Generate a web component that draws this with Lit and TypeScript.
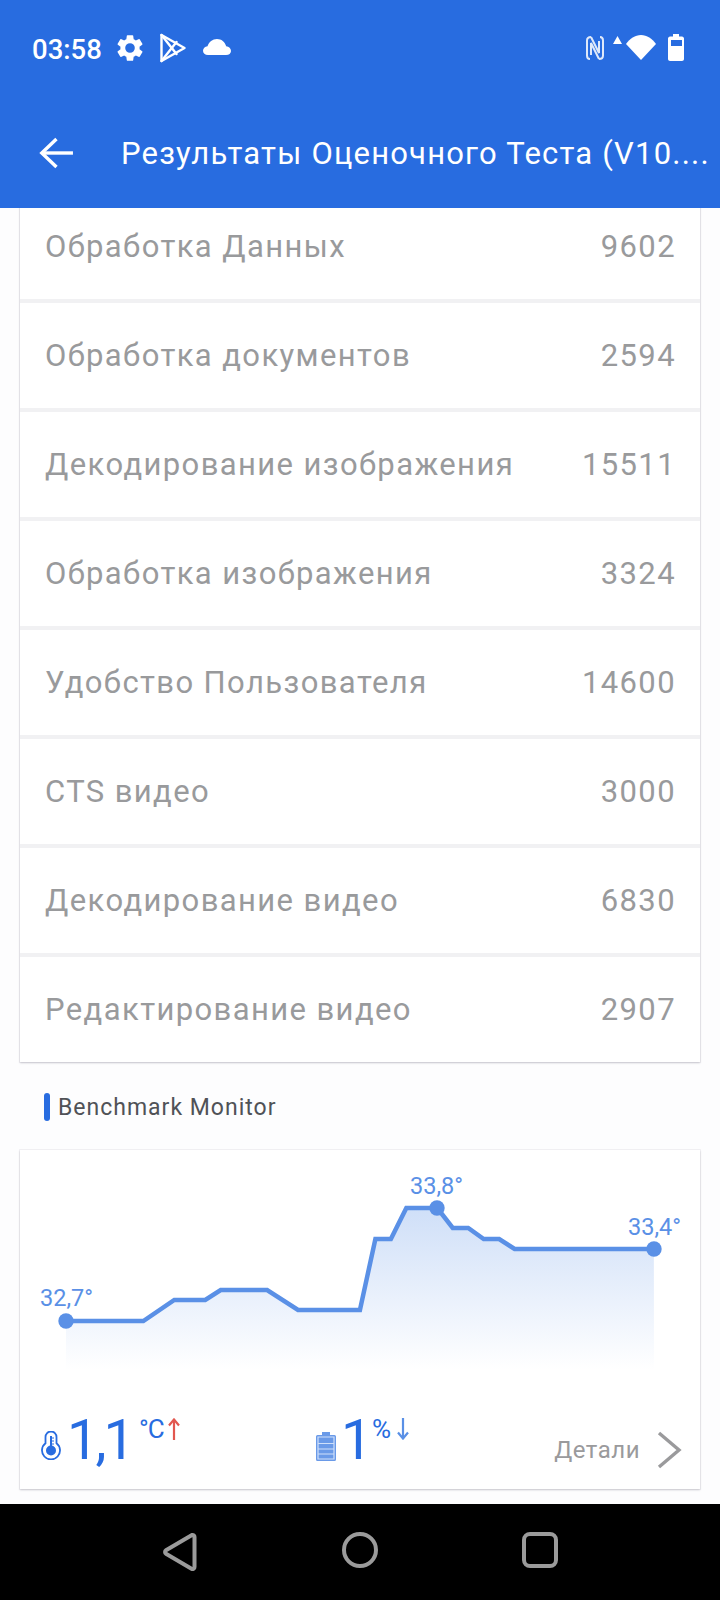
import { LitElement, html, css, svg } from "lit";
import { customElement } from "lit/decorators.js";

const ROWS: [string, string][] = [
  ["Обработка Данных", "9602"],
  ["Обработка документов", "2594"],
  ["Декодирование изображения", "15511"],
  ["Обработка изображения", "3324"],
  ["Удобство Пользователя", "14600"],
  ["CTS видео", "3000"],
  ["Декодирование видео", "6830"],
  ["Редактирование видео", "2907"],
];

const STEP = 15.47;
const TEMPS: [number, number][] = [
  [0, 1321], [5, 1321], [7, 1300], [9, 1300], [10, 1290], [13, 1290], [15, 1310], [19, 1310],
  [20, 1239], [21, 1239], [22, 1208], [24, 1208], [25, 1228], [26, 1228], [27, 1239], [28, 1239],
  [29, 1249], [38, 1249],
];
// chart svg starts at x=20,y=1150 on the page
const PTS = TEMPS.map(([i, y]) => [66 + STEP * i - 20, y - 1150] as [number, number]);
const LINE = PTS.map((p) => p.join(",")).join(" ");
const AREA = `${LINE} 634,220 46,220`;

@customElement("app-root")
export class AppRoot extends LitElement {
  static styles = css`
    :host {
      display: block;
      width: 720px;
      height: 1600px;
      background: #fdfdfe;
      font-family: Roboto, "Noto Sans", sans-serif;
      overflow: hidden;
    }
    .screen { display: flex; flex-direction: column; height: 1600px; }
    .top { height: 208px; background: #286ce0; color: #fff; flex: none; display: flex; flex-direction: column; position: relative; z-index: 1; }
    .status { height: 98px; display: flex; align-items: center; padding: 0 0 0 32px; }
    .time { font-size: 27.5px; font-weight: 500; width: 82px; }
    .status svg { display: block; flex: none; }
    .gear { margin-top: -2px; }
    .play { margin-left: 14px; margin-top: -3px; }
    .cloud { margin-left: 17px; margin-top: -4px; }
    .sp { flex: 1; }
    .nfc { margin-right: 9px; margin-top: -2px; }
    .tri { align-self: flex-start; margin: 36px 4px 0 0; }
    .wifi { margin-right: 12px; margin-top: -3px; }
    .batt { margin-right: 36px; margin-top: -3px; }
    .bar { height: 110px; display: flex; align-items: center; padding-left: 39px; }
    .title { margin-left: 48px; font-size: 31px; letter-spacing: 1.2px; white-space: nowrap; width: 600px; overflow: hidden; }
    .content { flex: 1; display: flex; flex-direction: column; min-height: 0; }
    .rows-clip { height: 858px; overflow: hidden; flex: none; }
    .rows { display: flex; flex-direction: column; gap: 4px; margin: -14px 20px 0; background: #f1f1f3; box-shadow: 0 1px 2px rgba(60, 60, 80, 0.25), 0 0 0 1px #f1f0f4; }
    .row {
      height: 105px;
      background: #fff;
      display: flex;
      align-items: center;
      justify-content: space-between;
      padding: 0 24px 0 25px;
      color: #999a9c;
      font-size: 31px;
      letter-spacing: 1.4px;
    }
    .section { display: flex; align-items: center; gap: 8px; margin: 26px 0 0 44px; height: 30px; }
    .tick { width: 6px; height: 28px; border-radius: 3px; background: #286ce0; }
    .section span { font-size: 23px; letter-spacing: 1px; color: #505257; }
    .card {
      margin: 28px 20px 0;
      height: 339px;
      background: #fff;
      box-shadow: 0 1px 2px rgba(60, 60, 80, 0.25), 0 0 0 1px #f3f2f5;
      display: flex;
      flex-direction: column;
    }
    .chart { display: block; flex: none; }
    .chart text { font-family: Roboto, sans-serif; font-size: 23.5px; fill: #5a90e6; }
    .stats { flex: none; height: 119px; display: flex; align-items: flex-start; }
    .stat { display: flex; align-items: flex-start; color: #286ce0; }
    .stat svg { display: block; flex: none; }
    .s1 { margin-left: 21px; width: 275px; }
    .icon-t { margin-top: 61px; }
    .icon-b { margin-top: 62px; }
    .arrow { margin-top: 48px; }
    .big { font-size: 56px; line-height: 56px; margin-top: 42px; white-space: nowrap; }
    .b1 { margin-left: 6px; width: 72px; letter-spacing: -3px; }
    .b2 { margin-left: 5px; width: 30px; }
    .unit { font-size: 26px; line-height: 30px; margin-top: 44px; white-space: nowrap; }
    .u1 { width: 29px; letter-spacing: -1px; }
    .u2 { width: 25px; margin-left: 1px; }
    .more { margin-left: auto; display: flex; align-items: center; margin-right: 18px; margin-top: 61px; color: #9a9a9c; font-size: 24px; letter-spacing: 0.5px; }
    .more svg { display: block; margin-left: 16px; }
    .gap { flex: 1; }
    .nav { height: 96px; flex: none; background: #000; display: flex; align-items: center; }
    .nav-in { display: grid; grid-template-columns: 180px 180px 180px; width: 540px; margin: 0 auto; justify-items: center; }
  `;

  render() {
    return html`<div class="screen">
      <div class="top">
        <div class="status">
          <span class="time">03:58</span>
          <svg class="gear" width="32" height="32" viewBox="0 0 24 24" fill="#fff"><path d="M19.14 12.94c.04-.3.06-.61.06-.94 0-.32-.02-.64-.07-.94l2.03-1.58a.49.49 0 0 0 .12-.61l-1.92-3.32a.49.49 0 0 0-.59-.22l-2.39.96c-.5-.38-1.03-.7-1.62-.94l-.36-2.54a.48.48 0 0 0-.48-.41h-3.84a.47.47 0 0 0-.47.41l-.36 2.54c-.59.24-1.13.57-1.62.94l-2.39-.96a.49.49 0 0 0-.59.22L2.74 8.87a.47.47 0 0 0 .12.61l2.03 1.58c-.05.3-.09.63-.09.94s.02.64.07.94l-2.03 1.58a.49.49 0 0 0-.12.61l1.92 3.32c.12.22.37.29.59.22l2.39-.96c.5.38 1.03.7 1.62.94l.36 2.54c.05.24.24.41.48.41h3.84c.24 0 .44-.17.47-.41l.36-2.54c.59-.24 1.13-.56 1.62-.94l2.39.96c.22.08.47 0 .59-.22l1.92-3.32a.47.47 0 0 0-.12-.61l-2.01-1.58zM12 15.6A3.6 3.6 0 1 1 12 8.4a3.6 3.6 0 0 1 0 7.2z"/></svg>
          <svg class="play" width="26" height="30" viewBox="0 0 26 30" fill="none" stroke="#fff" stroke-width="2.4" stroke-linejoin="round" stroke-linecap="round"><path d="M1.500 2 24.500 15 1.500 28z"/><path d="M1.500 2 16.500 21"/><path d="M1.500 28 16.500 9"/></svg>
          <svg class="cloud" width="28" height="16" viewBox="0 0 28 16" fill="#fff"><path d="M5 16C2 16 0 14.200 0 11.800 0 9.500 1.800 7.700 4.500 7.300 6 3 9.500 0 14 0c4.400 0 8 2.800 9.200 7.300C26 7.600 28 9.500 28 11.900 28 14.200 26 16 23 16z"/></svg>
          <span class="sp"></span>
          <svg class="nfc" width="18" height="24" viewBox="0 0 18 24" fill="none" stroke="#fff" stroke-width="2" opacity=".85"><path d="M5 1C2.500 1 1 2 1 4.500v15C1 22 2.500 23 4 23"/><path d="M13 23c2.500 0 4-1 4-3.500v-15C17 2 15.500 1 14 1"/><path d="M5 1 13 17V5"/><path d="M13 23 5 7v12"/></svg>
          <svg class="tri" width="9" height="8" viewBox="0 0 9 8" fill="#fff"><path d="M4.500 0 9 8H0z"/></svg>
          <svg class="wifi" width="30" height="25" viewBox="0 0 30 25" fill="#fff"><path d="M15 25 0 9C4 3.500 9 0 15 0s11 3.500 15 9z"/></svg>
          <svg class="batt" width="16" height="27" viewBox="0 0 16 27"><path fill="#fff" d="M5 0h6v2.500h3c1 0 2 1 2 2v20.500c0 1-1 2-2 2H2c-1 0-2-1-2-2V4.500c0-1 1-2 2-2h3z"/><rect x="3" y="6" width="11" height="6" fill="#286ce0"/></svg>
        </div>
        <div class="bar">
          <svg width="34" height="32" viewBox="0 0 34 32" fill="none" stroke="#fff" stroke-width="3.400"><path d="M34 16H3"/><path d="M17.500 2 2.800 16l14.700 14"/></svg>
          <div class="title">Результаты Оценочного Теста (V10....</div>
        </div>
      </div>
      <div class="content">
        <div class="rows-clip">
          <div class="rows">
            ${ROWS.map(([n, v]) => html`<div class="row"><span>${n}</span><span>${v}</span></div>`)}
          </div>
        </div>
        <div class="section"><i class="tick"></i><span>Benchmark Monitor</span></div>
        <div class="card">
          <svg class="chart" width="680" height="220" viewBox="0 0 680 220">
            <defs>
              <linearGradient id="g" x1="0" y1="58" x2="0" y2="220" gradientUnits="userSpaceOnUse">
                <stop offset="0" stop-color="#cfdff8"/>
                <stop offset="1" stop-color="#ffffff"/>
              </linearGradient>
            </defs>
            <polygon points=${AREA} fill="url(#g)"/>
            <polyline points=${LINE} fill="none" stroke="#5a90e6" stroke-width="4.500" stroke-linejoin="miter"/>
            ${[[46, 171], [417, 58], [634, 99]].map(([x, y]) => svg`<circle cx=${x} cy=${y} r="7.700" fill="#5a90e6"/>`)}
            <text x="20" y="156">32,7°</text>
            <text x="390" y="44">33,8°</text>
            <text x="608" y="85">33,4°</text>
          </svg>
          <div class="stats">
            <div class="stat s1">
              <svg class="icon-t" width="20" height="29" viewBox="0 0 20 29" fill="none" stroke="#286ce0" stroke-width="1.800"><path d="M4.500 6a5.500 5.500 0 0 1 11 0v6.300a9 9 0 1 1-11 0z"/><circle cx="10" cy="19.500" r="5" fill="#286ce0" stroke="none"/><path d="M10 5v12" stroke-width="2"/><path d="M10 7h3M10 10h3M10 13h3" stroke-width="1"/></svg>
              <span class="big b1">1,1</span>
              <span class="unit u1">°C</span>
              <svg class="arrow" width="12" height="22" viewBox="0 0 12 22" fill="none" stroke="#e2574f" stroke-width="2.200"><path d="M6 22V1.500"/><path d="M1 7.500 6 1.500l5 6"/></svg>
            </div>
            <div class="stat">
              <svg class="icon-b" width="20" height="29" viewBox="0 0 20 29"><path fill="#6a9ae8" d="M6 0h8v3h4.500A1.500 1.500 0 0 1 20 4.500v23a1.500 1.500 0 0 1-1.500 1.500h-17A1.500 1.500 0 0 1 0 27.500v-23A1.500 1.500 0 0 1 1.500 3H6z"/><path fill="none" stroke="#cfe0fa" stroke-width="1.200" d="M2 5h16v22H2zM2 11.500h16M2 17h16M2 22h16"/></svg>
              <span class="big b2">1</span>
              <span class="unit u2">%</span>
              <svg class="arrow" width="12" height="22" viewBox="0 0 12 22" fill="none" stroke="#5a90e6" stroke-width="2.200"><path d="M6 0v20.500"/><path d="M1 14.500l5 6 5-6"/></svg>
            </div>
            <div class="more"><span>Детали</span>
              <svg width="26" height="38" viewBox="0 0 26 38" fill="none" stroke="#9a9a9c" stroke-width="3.400"><path d="M3 2l20 17L3 36"/></svg>
            </div>
          </div>
        </div>
        <div class="gap"></div>
      </div>
      <div class="nav">
        <div class="nav-in">
          <svg width="36" height="40" viewBox="0 0 36 40" fill="none" stroke="#9b9b9b" stroke-width="4" stroke-linejoin="round"><path d="M30 3a2 2 0 0 1 2.500 2v30a2 2 0 0 1-3 1.800L4 21.700a2 2 0 0 1 0-3.400z"/></svg>
          <svg width="36" height="36" viewBox="0 0 36 36" fill="none" stroke="#9b9b9b" stroke-width="4"><circle cx="18" cy="18" r="16"/></svg>
          <svg width="36" height="36" viewBox="0 0 36 36" fill="none" stroke="#9b9b9b" stroke-width="4"><rect x="2" y="2" width="32" height="32" rx="6"/></svg>
        </div>
      </div>
    </div>`;
  }
}
